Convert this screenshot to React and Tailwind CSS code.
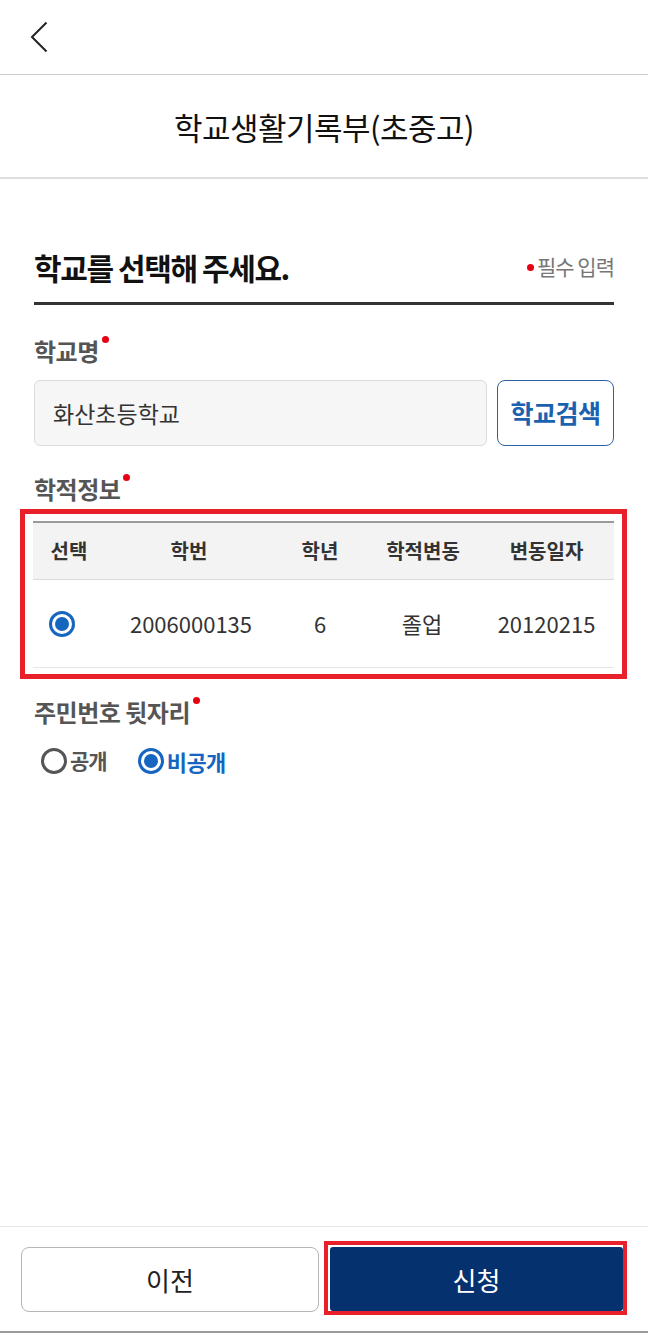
import React from "react";

const font = { fontFamily: '"Noto Sans CJK KR", "Noto Sans", sans-serif' };

function Label({ children }) {
  return (
    <div className="flex items-start h-[32px] text-[24px] leading-[32px] font-bold text-[#555] tracking-[-0.5px]">
      <span>{children}</span>
      <span className="inline-block w-[7px] h-[7px] rounded-full bg-[#e60012] ml-[3px] mt-[1px]" />
    </div>
  );
}

function Radio({ checked }) {
  if (checked) {
    return (
      <span className="w-[26px] h-[26px] rounded-full border-[3px] border-[#1666c1] flex items-center justify-center bg-white">
        <span className="w-[14px] h-[14px] rounded-full bg-[#1666c1]" />
      </span>
    );
  }
  return <span className="w-[26px] h-[26px] rounded-full border-[3px] bg-white border-[#555]" />;
}

export default function App() {
  return (
    <div className="w-[648px] h-[1333px] flex flex-col bg-white text-[#222]" style={font}>
      <div className="h-[75px] border-b border-[#cfcfcf] flex items-center pl-[30px]">
        <svg width="18" height="32" viewBox="0 0 18 32" fill="none">
          <path d="M16.5 1.5 L2 16 L16.5 30.5" stroke="#222" strokeWidth="2" />
        </svg>
      </div>
      <div className="h-[104px] border-b-2 border-[#dedede] flex items-center justify-center pt-[3px]">
        <span className="text-[31px] text-[#111] tracking-[-0.5px]">학교생활기록부(초중고)</span>
      </div>

      <div className="px-[34px] flex flex-col">
        <div className="mt-[67px] flex items-center justify-between h-[42px]">
          <span className="text-[30px] font-bold tracking-[-1.4px] text-[#111]">학교를 선택해 주세요.</span>
          <span className="flex items-center text-[21px] text-[#777] tracking-[-1px]">
            <span className="w-[7px] h-[7px] rounded-full bg-[#e60012] mr-[3px]" />
            필수 입력
          </span>
        </div>
        <div className="mt-[14px] h-[3px] bg-[#333]" />

        <div className="mt-[30px]">
          <Label>학교명</Label>
        </div>
        <div className="mt-[13px] flex gap-[10px] h-[66px]">
          <div className="flex-1 bg-[#f6f6f6] border border-[#dcdcdc] rounded-[6px] flex items-center pl-[18px] text-[23px] text-[#333]">
            화산초등학교
          </div>
          <button className="w-[117px] border border-[#2a63a8] rounded-[8px] bg-white text-[#1a62b0] text-[25px] font-bold tracking-[-0.5px]">
            학교검색
          </button>
        </div>

        <div className="mt-[27px]">
          <Label>학적정보</Label>
        </div>
        <div className="mt-[4px] -ml-[14px] -mr-[13px] border-[5px] border-[#e8202a] pt-[7px] pb-[6px] pl-[8px] pr-[8px]">
          <div className="border-t-2 border-[#9a9a9a]">
            <div className="flex h-[57px] bg-[#f3f3f3] border-b border-[#dadada] items-center text-[20px] font-bold text-[#333]">
              <div className="w-[72px] text-center">선택</div>
              <div className="w-[168px] text-center">학번</div>
              <div className="w-[94px] text-center">학년</div>
              <div className="w-[112px] text-center">학적변동</div>
              <div className="flex-1 text-center">변동일자</div>
            </div>
            <div className="flex h-[88px] border-b border-[#e6e6e6] items-center text-[22px] text-[#333]">
              <div className="w-[58px] flex justify-center">
                <Radio checked />
              </div>
              <div className="w-[184px] text-center pl-[16px]">2006000135</div>
              <div className="w-[90px] text-center">6</div>
              <div className="w-[114px] text-center">졸업</div>
              <div className="flex-1 text-center">20120215</div>
            </div>
          </div>
        </div>

        <div className="mt-[17px]">
          <Label>주민번호 뒷자리</Label>
        </div>
        <div className="mt-[18px] h-[30px] flex items-center pl-[7px]">
          <div className="flex items-center gap-[3px]">
            <Radio />
            <span className="text-[21px] font-bold text-[#555] tracking-[-1px]">공개</span>
          </div>
          <div className="flex items-center gap-[3px] ml-[31px]">
            <Radio checked />
            <span className="text-[22px] font-bold text-[#1666c1] tracking-[-0.5px]">비공개</span>
          </div>
        </div>
      </div>

      <div className="mt-auto border-t border-[#e6e6e6] border-b-2 border-b-[#9a9a9a] h-[107px] flex items-start px-[21px]">
        <button className="mt-[20px] w-[298px] h-[65px] border border-[#b5b5b5] rounded-[8px] bg-white text-[26px] text-[#222]">
          이전
        </button>
        <div className="mt-[14px] ml-[5px] w-[303px] h-[74px] border-[4px] border-[#e8202a] pl-[2px] pt-[2px]">
          <button className="w-full h-[64px] bg-[#05316f] rounded-[3px] text-white text-[26px]">
            신청
          </button>
        </div>
      </div>
    </div>
  );
}
